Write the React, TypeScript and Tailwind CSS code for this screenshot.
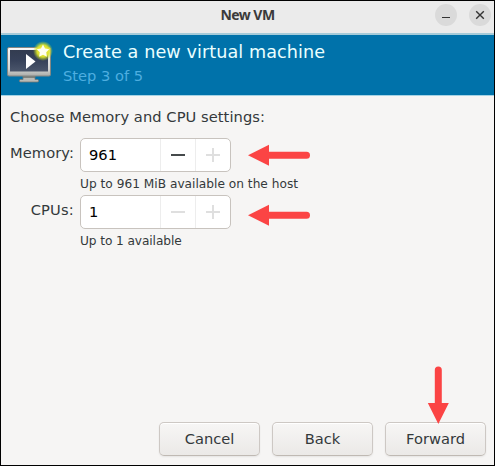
import React from "react";

function MonitorIcon() {
  return (
    <svg width="47" height="42" viewBox="0 0 47 42" className="block">
      <defs>
        <linearGradient id="frame" x1="0" y1="0" x2="0" y2="1">
          <stop offset="0" stopColor="#fafafa" />
          <stop offset="0.75" stopColor="#d5d6d4" />
          <stop offset="1" stopColor="#a9aba8" />
        </linearGradient>
        <linearGradient id="screen" x1="0" y1="0" x2="0" y2="1">
          <stop offset="0" stopColor="#333c50" />
          <stop offset="0.5" stopColor="#37425a" />
          <stop offset="1" stopColor="#4b566b" />
        </linearGradient>
        <radialGradient id="glow">
          <stop offset="0" stopColor="#fff45c" />
          <stop offset="0.6" stopColor="#dfe52a" stopOpacity="0.95" />
          <stop offset="1" stopColor="#b5d52c" stopOpacity="0" />
        </radialGradient>
      </defs>
      <path d="M17 35h12v3.5h3q1.500 1.500 0 2.500H14q-1.500-1 0-2.500h3z" fill="#b9bbb7" stroke="#747672" strokeWidth="0.8" />
      <path d="M17 36h12" stroke="#6d706b" strokeWidth="1.5" />
      <rect x="1.500" y="6.500" width="43" height="28.500" rx="1.500" fill="url(#frame)" stroke="#858783" />
      <rect x="4" y="9" width="38" height="21.500" fill="url(#screen)" />
      <path d="M20 13v15l9.500-7.500z" fill="#fff" />
      <circle cx="37" cy="10" r="10" fill="url(#glow)" />
      <path d="M37 3.500l2 4.100 4.300.6-3.100 3.100.7 4.500-3.900-2.100-3.900 2.100.7-4.500-3.100-3.100 4.300-.6z" fill="#fffff0" />
    </svg>
  );
}

function SpinBox({ value, canDecrease }: { value: string; canDecrease?: boolean }) {
  return (
    <div className="flex h-[34px] w-[151px] overflow-hidden rounded-[5px] border border-[#c8c3be] bg-white">
      <div className="flex w-[79px] items-center pl-2 text-[14.67px] text-black">{value}</div>
      <div className="flex w-[35px] items-center justify-center border-l border-[#ededed]">
        <div className={canDecrease ? "h-[2px] w-[14px] bg-[#454a4c]" : "h-[2px] w-[14px] bg-[#dfdfdf]"} />
      </div>
      <div className="flex w-[35px] items-center justify-center border-l border-[#ededed]">
        <svg width="14" height="14" className="block">
          <path d="M0 7h14M7 0v14" stroke="#dfdfdf" strokeWidth="2" />
        </svg>
      </div>
    </div>
  );
}

function Arrow({ length }: { length: number }) {
  return (
    <svg width={length} height="22" className="block">
      <path d={`M18 11.3H${length - 3.5}`} stroke="#fb4444" strokeWidth="7" strokeLinecap="round" />
      <path d="M0 11.3L21 0.800v21z" fill="#fb4444" />
    </svg>
  );
}

function Button({ label }: { label: string }) {
  return (
    <button className="h-[34px] w-[101px] rounded-[5px] border border-[#cdc8c4] border-b-[#bfb9b3] bg-linear-to-b from-[#f7f6f5] to-[#ebe9e7] text-[14.67px] shadow-[0_1px_2px_rgba(0,0,0,0.07),inset_0_1px_#fff]">
      {label}
    </button>
  );
}

export default function App() {
  return (
    <div className="flex h-[466px] w-[495px] flex-col border border-black bg-[#f6f5f4] font-['DejaVu_Sans',sans-serif] text-[14.67px] text-[#34393b]">
      <header className="relative flex h-[32px] shrink-0 items-center justify-center bg-[#ebebeb]">
        <h1 className="pb-[5px] font-['Noto_Sans',sans-serif] text-[14px] font-bold tracking-[-0.55px] text-[#3b3b3b]">New VM</h1>
        <div className="absolute top-[3px] right-[3px] flex gap-3">
          <button className="flex size-[22px] items-center justify-center rounded-full bg-[#dadada]">
            <svg width="22" height="22"><path d="M7 13.500h8" stroke="#333" /></svg>
          </button>
          <button className="flex size-[22px] items-center justify-center rounded-full bg-[#dadada]">
            <svg width="22" height="22"><path d="M7.200 7.200l7.600 7.600M14.800 7.200l-7.600 7.600" stroke="#333" strokeWidth="1.4" /></svg>
          </button>
        </div>
      </header>
      <section className="flex h-[63px] shrink-0 border-t-2 border-b border-t-[#a5cbd9] border-b-[#a5d3e5] bg-[#0072aa] pt-[6px] pl-[5px]">
        <MonitorIcon />
        <div className="pl-[10px]">
          <div className="h-[22px] text-[17.6px] leading-[22px] tracking-[0.08px] whitespace-nowrap text-[#eaffff]">Create a new virtual machine</div>
          <div className="mt-[3px] h-5 text-[14.67px] leading-5 text-[#4eaee0]">Step 3 of 5</div>
        </div>
      </section>
      <main className="flex flex-1 flex-col pt-[11px] pl-[9px]">
        <div className="h-5 leading-5 tracking-[0.06px] whitespace-nowrap">Choose Memory and CPU settings:</div>
        <div className="mt-[11px] grid grid-cols-[64px_auto] gap-x-[6px]">
          <label className="pt-[5px] text-right leading-5 tracking-[0.08px]">Memory:</label>
          <div className="flex items-center gap-[17px]">
            <SpinBox value="961" canDecrease />
            <Arrow length={62} />
          </div>
          <div className="col-start-2 h-[23px] pt-[1px] text-[12.2px] leading-[22px] whitespace-nowrap">Up to 961 MiB available on the host</div>
          <label className="pt-[5px] text-right leading-5 tracking-[0.2px]">CPUs:</label>
          <div className="flex items-center gap-[17px]">
            <SpinBox value="1" />
            <div className="pt-[6px]"><Arrow length={62} /></div>
          </div>
          <div className="col-start-2 h-[23px] pt-[1px] text-[12.2px] leading-[22px] tracking-[-0.1px] whitespace-nowrap">Up to 1 available</div>
        </div>
      </main>
      <footer className="relative flex h-[43px] shrink-0 justify-end gap-3 pr-2">
        <Button label="Cancel" />
        <Button label="Back" />
        <Button label="Forward" />
        <svg width="22" height="58" className="absolute right-[45px] bottom-[41px]">
          <path d="M11.300 4v36" stroke="#fb4444" strokeWidth="7" strokeLinecap="round" />
          <path d="M11.300 58L0.800 37h21z" fill="#fb4444" />
        </svg>
      </footer>
    </div>
  );
}
